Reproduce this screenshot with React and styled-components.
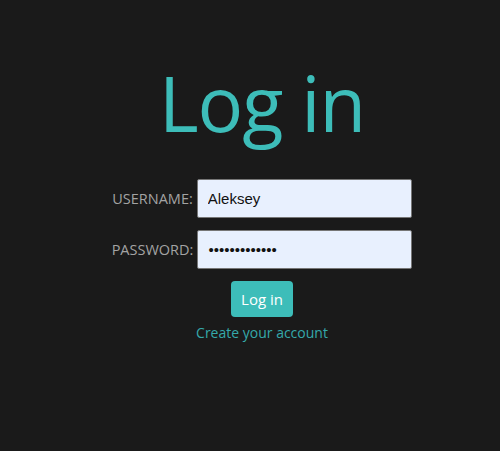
import React from 'react';
import styled, { createGlobalStyle } from 'styled-components';

const Global = createGlobalStyle`
    html, body {
        margin: 0;
        background: #1a1a1a;
        height: 100%;
    }
    body {
        font-family: "Open Sans", "Noto Sans", sans-serif;
    }
`

const Page = styled.main`
    display: flex;
    flex-direction: column;
    align-items: center;
    padding: 57px 0 0 24px;
`

const Title = styled.h1`
    margin: 0 0 31px;
    font-size: 76px;
    font-weight: 400;
    line-height: 1.2;
    color: #3dbdb9;
    letter-spacing: -1px;
`

const Form = styled.form`
    display: flex;
    flex-direction: column;
    align-items: center;
    gap: 12px;
`

const Row = styled.div`
    display: flex;
    align-items: center;
    gap: 4px;
`

const Label = styled.label`
    font-size: 14.5px;
    color: #a3a3a3;
    text-transform: uppercase;
`

const Input = styled.input`
    box-sizing: border-box;
    width: 215px;
    height: 39px;
    padding: 0 10px;
    background: #e8f0fe;
    border: 1px solid #767676;
    border-radius: 2px;
    font-family: "Liberation Sans", Arial, sans-serif;
    font-size: 15px;
    color: #111;
    outline: none;
`

const Button = styled.button`
    height: 36px;
    padding: 0 10px;
    background: #3dbdb9;
    color: #fff;
    border: none;
    border-radius: 4px;
    font-family: inherit;
    font-size: 15px;
    cursor: pointer;
`

const Link = styled.a`
    margin-top: -6px;
    font-size: 14px;
    color: #35a9aa;
    text-decoration: none;
`

export default function App() {
    return (
        <>
            <Global />
            <Page>
                <Title>Log in</Title>
                <Form onSubmit={e => e.preventDefault()}>
                    <Row>
                        <Label htmlFor="username">Username:</Label>
                        <Input id="username" type="text" defaultValue="Aleksey" />
                    </Row>
                    <Row>
                        <Label htmlFor="password">Password:</Label>
                        <Input id="password" type="password" defaultValue="aleksey123456" />
                    </Row>
                    <Button type="submit">Log in</Button>
                    <Link href="#">Create your account</Link>
                </Form>
            </Page>
        </>
    )
}
